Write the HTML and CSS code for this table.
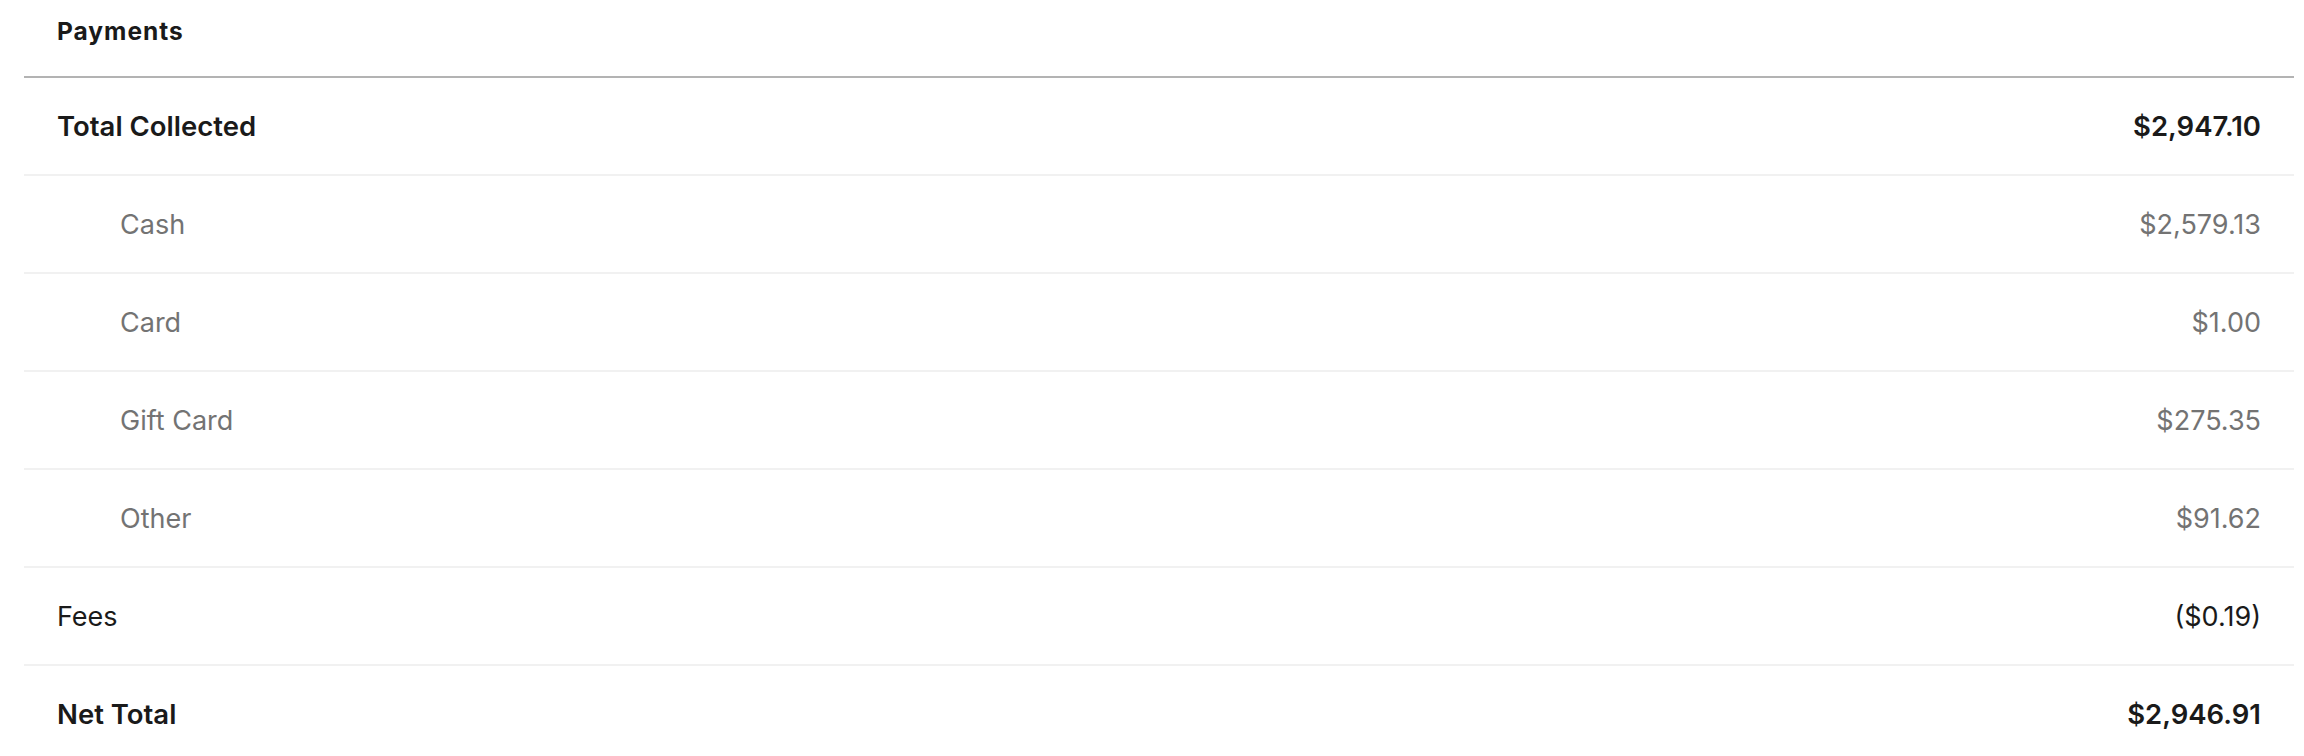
FILE: index.html
```html
<!DOCTYPE html>
<html lang="en">
<head>
<meta charset="utf-8">
<title>Payments</title>
<link rel="stylesheet" href="styles.css">
</head>
<body>
<section class="report">
  <div class="report-head">Payments</div>
  <div class="row row-strong"><span>Total Collected</span><span>$2,947.10</span></div>
  <div class="row row-sub"><span>Cash</span><span>$2,579.13</span></div>
  <div class="row row-sub"><span>Card</span><span>$1.00</span></div>
  <div class="row row-sub"><span>Gift Card</span><span>$275.35</span></div>
  <div class="row row-sub"><span>Other</span><span>$91.62</span></div>
  <div class="row"><span>Fees</span><span>($0.19)</span></div>
  <div class="row row-strong"><span>Net Total</span><span>$2,946.91</span></div>
</section>
</body>
</html>
```

FILE: styles.css
```css
html, body {
  margin: 0;
  padding: 0;
  background: #ffffff;
}
body {
  font-family: Inter, "Noto Sans", "Liberation Sans", sans-serif;
  color: #1a1a1a;
}
.report {
  margin: 0 10px 0 24px;
}
.report-head {
  height: 78px;
  box-sizing: border-box;
  padding: 14px 33px 0;
  font-size: 24.5px;
  font-weight: 700;
  letter-spacing: 1px;
  line-height: 34px;
  border-bottom: 2px solid #b3b3b3;
}
.row {
  display: flex;
  justify-content: space-between;
  align-items: center;
  height: 98px;
  box-sizing: border-box;
  padding: 0 33px;
  border-bottom: 2px solid #f1f1f1;
  font-size: 27px;
  font-weight: 400;
  color: #1a1a1a;
}
.row-strong {
  font-size: 27.5px;
  font-weight: 600;
}
.row-sub {
  padding-left: 96px;
  color: #737373;
}
```
